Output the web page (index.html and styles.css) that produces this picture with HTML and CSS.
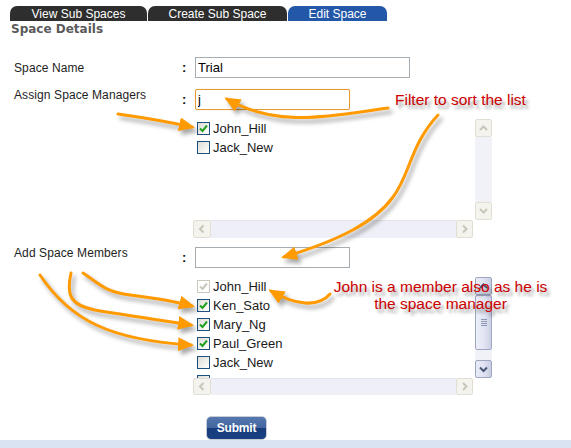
FILE: index.html
```html
<!DOCTYPE html>
<html>
<head>
<meta charset="utf-8">
<title>Edit Space</title>
<link rel="stylesheet" href="styles.css">
</head>
<body>
<div class="page">
  <nav class="tabs">
    <span class="tab dark t1">View Sub Spaces</span>
    <span class="tab dark t2">Create Sub Space</span>
    <span class="tab active t3">Edit Space</span>
  </nav>
  <h1 class="title">Space Details</h1>

  <form class="form">
    <div class="row r1">
      <label class="lbl mid">Space Name</label>
      <span class="colon">:</span>
      <div class="field"><input class="txt wide" type="text" value="Trial"></div>
    </div>

    <div class="row r2">
      <label class="lbl top">Assign Space Managers</label>
      <span class="colon">:</span>
      <div class="field">
        <input class="txt narrow focus" type="text" value="j">
        <div class="listbox">
          <div class="items">
            <div class="item"><span class="cb on"><svg viewBox="0 0 11 11" width="11" height="11"><path d="M2,5.5 L4.5,8 L9,2.5"/></svg></span>John_Hill</div>
            <div class="item"><span class="cb"></span>Jack_New</div>
          </div>
          <div class="vbar">
            <span class="sbtn off"><svg viewBox="0 0 15 16" width="15" height="16"><path d="M4,10 L7.5,6.5 L11,10"/></svg></span>
            <span class="vtrack"></span>
            <span class="sbtn off"><svg viewBox="0 0 15 15" width="15" height="15"><path d="M4,6 L7.5,9.5 L11,6"/></svg></span>
          </div>
          <div class="hbar">
            <span class="sbtn off hl"><svg viewBox="0 0 16 16" width="16" height="16"><path d="M9.5,4.5 L6,8 L9.5,11.5"/></svg></span>
            <span class="htrack"></span>
            <span class="sbtn off hr"><svg viewBox="0 0 15 16" width="15" height="16"><path d="M6,4.5 L9.5,8 L6,11.5"/></svg></span>
          </div>
          <div class="corner"></div>
        </div>
      </div>
    </div>

    <div class="row r3">
      <label class="lbl top">Add Space Members</label>
      <span class="colon">:</span>
      <div class="field">
        <input class="txt narrow" type="text" value="">
        <div class="listbox lb2">
          <div class="items">
            <div class="item"><span class="cb dis"><svg viewBox="0 0 11 11" width="11" height="11"><path d="M2,5.5 L4.5,8 L9,2.5"/></svg></span><span class="distext">John_Hill</span></div>
            <div class="item"><span class="cb on"><svg viewBox="0 0 11 11" width="11" height="11"><path d="M2,5.5 L4.5,8 L9,2.5"/></svg></span>Ken_Sato</div>
            <div class="item"><span class="cb on"><svg viewBox="0 0 11 11" width="11" height="11"><path d="M2,5.5 L4.5,8 L9,2.5"/></svg></span>Mary_Ng</div>
            <div class="item"><span class="cb on"><svg viewBox="0 0 11 11" width="11" height="11"><path d="M2,5.5 L4.5,8 L9,2.5"/></svg></span>Paul_Green</div>
            <div class="item"><span class="cb"></span>Jack_New</div>
            <div class="item"><span class="cb"></span></div>
          </div>
          <div class="vbar">
            <span class="sbtn act"><svg viewBox="0 0 15 16" width="15" height="16"><path d="M4,10 L7.5,6.5 L11,10"/></svg></span>
            <span class="thumb"><span class="grip"></span></span>
            <span class="vtrack"></span>
            <span class="sbtn act"><svg viewBox="0 0 15 16" width="15" height="16"><path d="M4,6.5 L7.5,10 L11,6.5"/></svg></span>
          </div>
          <div class="hbar">
            <span class="sbtn off hl"><svg viewBox="0 0 16 15" width="16" height="15"><path d="M9.5,4 L6,7.5 L9.5,11"/></svg></span>
            <span class="htrack"></span>
            <span class="sbtn off hr"><svg viewBox="0 0 15 15" width="15" height="15"><path d="M6,4 L9.5,7.5 L6,11"/></svg></span>
          </div>
          <div class="corner"></div>
        </div>
      </div>
    </div>

    <div class="submit-row"><button class="submit" type="button">Submit</button></div>
  </form>
  <div class="strip"></div>

  <svg class="arrows" width="571" height="448" viewBox="0 0 571 448">
    <defs>
      <marker id="ah" viewBox="0 0 16 14" refX="13" refY="7" markerWidth="16" markerHeight="14" orient="auto" markerUnits="userSpaceOnUse">
        <path d="M0,0 L16,7 L0,14 Z" fill="#ff9a00"/>
      </marker>
    </defs>
    <g fill="none" stroke="#ff9a00" stroke-width="3" stroke-linecap="round" marker-end="url(#ah)">
      <path d="M388,108 C340,114 280,130 227,99"/>
      <path d="M438,115 C410,145 410,175 393,197 C375,222 340,240 284,257"/>
      <path d="M118,114 Q160,120 192,127"/>
      <path d="M330,294 C318,308 295,305 271,291"/>
      <path d="M83,273 C100,284 105,292 130,295 C155,298 170,300 192,306"/>
      <path d="M71,273 C66,295 70,305 95,310 C130,316 160,320 191,325"/>
      <path d="M40,275 C70,320 110,340 191,345"/>
    </g>
  </svg>

  <div class="note n1">Filter to sort the list</div>
  <div class="note n2">John is a member also as he is<br>the space manager</div>
</div>
</body>
</html>
```

FILE: styles.css
```css
html, body {
  margin: 0;
  padding: 0;
  background: #ffffff;
}
body {
  overflow: hidden;
  font-family: "Liberation Sans", Arial, sans-serif;
  color: #222;
}
.page {
  position: relative;
  width: 571px;
  height: 448px;
  overflow: hidden;
}

/* tabs */
.tabs {
  display: flex;
  gap: 1px;
  padding: 6px 0 0 10px;
  height: 15px;
}
.tab {
  display: block;
  box-sizing: border-box;
  height: 15px;
  padding-top: 1px;
  line-height: 14px;
  font-size: 12px;
  color: #fff;
  text-align: center;
  border-radius: 7px 7px 0 0;
}
.tab.dark { background: #2e2e2e; }
.tab.active { background: #2358a8; }
.t1 { width: 137px; }
.t2 { width: 139px; }
.t3 { width: 99px; }

.title {
  margin: 1px 0 0 11px;
  font-family: "DejaVu Sans", Verdana, sans-serif;
  font-size: 12px;
  line-height: 14px;
  font-weight: bold;
  color: #5a5a5a;
}

/* form */
.form {
  margin: 21px 0 0 0;
}
.row {
  display: grid;
  grid-template-columns: 168px 13px 1fr;
  padding-left: 14px;
}
.r2 { margin-top: 11px; }
.r3 { margin-top: 9px; }
.lbl {
  font-size: 12px;
  line-height: 14px;
  color: #1e1e1e;
  letter-spacing: 0.1px;
}
.lbl.mid { align-self: center; }
.lbl.top { align-self: start; margin-top: -1.5px; }
.colon {
  align-self: start;
  height: 21px;
  line-height: 21px;
  font-size: 13px;
  font-weight: bold;
  color: #111;
}
.field {
  display: flex;
  flex-direction: column;
  align-items: flex-start;
}
.txt {
  box-sizing: border-box;
  height: 21px;
  margin: 0;
  padding: 0 2px;
  border: 1px solid #a5acb2;
  font-family: "Liberation Sans", Arial, sans-serif;
  font-size: 13px;
  color: #000;
  background: #fff;
  outline: none;
}
.txt.wide { width: 215px; }
.txt.narrow { width: 155px; }
.txt.focus {
  border-color: #e49b33;
  border-radius: 2px;
  box-shadow: 0 0 1px 0 #f2c27a;
}

/* list boxes */
.listbox {
  margin: 9px 0 0 -2px;
  display: grid;
  grid-template-columns: 282px 17px;
  grid-template-rows: 101px 18px;
  background: #fff;
}
.listbox.lb2 {
  grid-template-rows: 101px 17px;
}
.items {
  overflow: hidden;
  padding-left: 4px;
}
.item {
  display: flex;
  align-items: center;
  gap: 3px;
  height: 19px;
  font-size: 13px;
  line-height: 19px;
  color: #1a1a1a;
  white-space: nowrap;
}
.cb {
  box-sizing: border-box;
  flex: none;
  width: 13px;
  height: 13px;
  border: 1px solid #1c5180;
  background: linear-gradient(135deg, #dcdbd4 0%, #f6f6f3 70%, #ffffff 100%);
  display: block;
}
.cb svg { display: block; }
.cb svg path {
  fill: none;
  stroke: #21a121;
  stroke-width: 2;
}
.cb.dis {
  border-color: #cac8bb;
  background: #fff;
}
.cb.dis svg path { stroke: #c8c6b9; }
.distext { color: #1a1a1a; }

/* scrollbars */
.vbar {
  display: flex;
  flex-direction: column;
}
.vtrack {
  flex: 1;
  background: #f1f1f8;
}
.hbar {
  display: flex;
  margin-right: 2px;
}
.htrack {
  flex: 1;
  background: #efeff7;
  border-top: 1px solid #e4e4ee;
}
.sbtn {
  box-sizing: border-box;
  display: block;
  flex: none;
  width: 17px;
  height: 18px;
  border-radius: 2px;
}
.sbtn svg { display: block; margin: 0 auto; }
.sbtn svg path {
  fill: none;
  stroke-width: 2;
}
.sbtn.off {
  background: #f4f3ed;
  border: 1px solid #e1dfd4;
}
.sbtn.off svg path { stroke: #c8c6ba; }
.hbar .sbtn { height: 100%; }
.hbar .sbtn.hl { width: 18px; }
.sbtn.act {
  background: linear-gradient(90deg, #e9ebf6 0%, #dfe3f2 50%, #c8cde2 100%);
  border: 1px solid #9ea6c2;
}
.sbtn.act svg path { stroke: #4a5878; }
.thumb {
  box-sizing: border-box;
  flex: none;
  height: 55px;
  display: flex;
  align-items: center;
  justify-content: center;
  border: 1px solid #9ea6c2;
  border-radius: 2px;
  background: linear-gradient(90deg, #eef0f9 0%, #e2e5f3 50%, #ccd1e5 100%);
}
.grip {
  display: block;
  width: 6px;
  height: 7px;
  background: repeating-linear-gradient(180deg, #8e98b6 0, #8e98b6 1px, transparent 1px, transparent 2px);
}
.corner { background: #fff; }

/* submit */
.submit-row {
  margin-top: 21px;
  padding-left: 206px;
  height: 24px;
}
.submit {
  display: block;
  box-sizing: border-box;
  width: 61px;
  height: 24px;
  margin: 0;
  padding: 0;
  border: 1px solid #c9ccd3;
  border-radius: 5px;
  background: linear-gradient(180deg, #5678b0 0%, #4466a0 48%, #173c7c 52%, #1a4082 100%);
  color: #fff;
  font-family: "Liberation Sans", Arial, sans-serif;
  font-size: 12px;
  font-weight: bold;
  letter-spacing: -0.2px;
}
.strip {
  height: 8px;
  background: #dae3f2;
}

/* annotations */
.arrows {
  position: absolute;
  left: 0;
  top: 0;
  pointer-events: none;
  filter: drop-shadow(3px 4px 2px rgba(0, 0, 0, 0.35));
}
.note {
  position: absolute;
  font-family: "Liberation Sans", Arial, sans-serif;
  font-size: 15.5px;
  line-height: 17px;
  color: #cc0000;
  white-space: nowrap;
  text-shadow: 3px 4px 3px rgba(60, 60, 60, 0.45);
}
.n1 { left: 395px; top: 91px; }
.n2 { left: 330px; top: 278px; width: 221px; text-align: center; }
```
